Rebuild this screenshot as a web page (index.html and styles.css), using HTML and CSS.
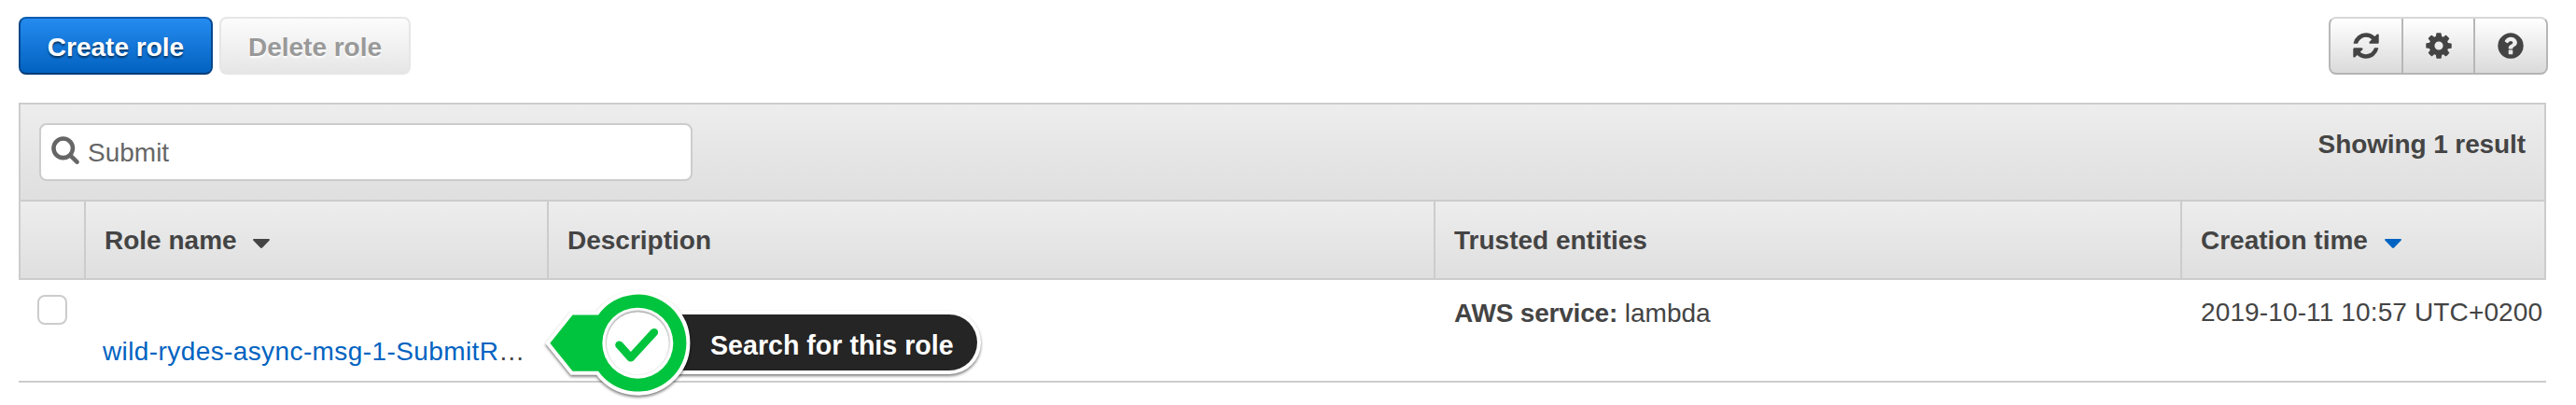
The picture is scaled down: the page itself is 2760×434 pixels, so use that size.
FILE: index.html
```html
<!DOCTYPE html>
<html lang="en">
<head>
<meta charset="utf-8">
<title>Roles</title>
<link rel="stylesheet" href="styles.css">
</head>
<body>
<main class="page">
  <div class="toolbar">
    <button class="btn btn-primary">Create role</button>
    <button class="btn btn-disabled" disabled>Delete role</button>
    <div class="btn-group">
      <button class="icon-btn" aria-label="Refresh"><svg class="icon" viewBox="0 0 1792 1792"><path d="M1639 1056q0 5-1 7-64 268-268 434.500t-478 166.500q-146 0-282.500-55t-243.500-157l-129 129q-19 19-45 19t-45-19-19-45v-448q0-26 19-45t45-19h448q26 0 45 19t19 45-19 45l-137 137q71 66 161 102t187 36q134 0 250-65t186-179q11-17 53-117 8-23 30-23h192q13 0 22.500 9.500t9.500 22.500zm25-800v448q0 26-19 45t-45 19h-448q-26 0-45-19t-19-45 19-45l138-138q-148-137-349-137-134 0-250 65t-186 179q-11 17-53 117-8 23-30 23h-199q-13 0-22.500-9.500t-9.500-22.500v-7q65-268 270-434.500t480-166.500q146 0 284 55.500t245 156.500l130-129q19-19 45-19t45 19 19 45z"/></svg></button>
      <button class="icon-btn" aria-label="Settings"><svg class="icon" viewBox="0 0 1792 1792"><path d="M1152 896q0-106-75-181t-181-75-181 75-75 181 75 181 181 75 181-75 75-181zm512-109v222q0 12-8 23t-20 13l-185 28q-19 54-39 91 35 50 107 138 10 12 10 25t-9 23q-27 37-99 108t-94 71q-12 0-26-9l-138-108q-44 23-91 38-16 136-29 186-7 28-36 28h-222q-14 0-24.500-8.500t-11.500-21.500l-28-184q-49-16-90-37l-141 107q-10 9-25 9-14 0-25-11-126-114-165-168-7-10-7-23 0-12 8-23 15-21 51-66.500t54-70.500q-27-50-41-99l-183-27q-13-2-21-12.500t-8-23.500v-222q0-12 8-23t19-13l186-28q14-46 39-92-40-57-107-138-10-12-10-24 0-10 9-23 26-36 98.500-107.500t94.500-71.500q13 0 26 10l138 107q44-23 91-38 16-136 29-186 7-28 36-28h222q14 0 24.500 8.500t11.500 21.500l28 184q49 16 90 37l142-107q9-9 24-9 13 0 25 10 129 119 165 170 7 8 7 22 0 12-8 23-15 21-51 66.500t-54 70.500q26 50 41 98l183 28q13 2 21 12.500t8 23.500z"/></svg></button>
      <button class="icon-btn" aria-label="Help"><svg class="icon" viewBox="0 0 1792 1792"><path d="M1024 1376v-192q0-14-9-23t-23-9h-192q-14 0-23 9t-9 23v192q0 14 9 23t23 9h192q14 0 23-9t9-23zm256-672q0-88-55.500-163t-138.500-116-170-41q-243 0-371 213-15 24 8 42l132 100q7 6 19 6 16 0 25-12 53-68 86-92 34-24 86-24 48 0 85.500 26t37.500 59q0 38-20 61t-68 45q-63 28-115.500 86.500t-52.500 125.500v36q0 14 9 23t23 9h192q14 0 23-9t9-23q0-19 21.500-49.500t54.500-49.500q32-18 49-28.500t46-35 44.500-48 28-60.500 12.500-81zm384 192q0 209-103 385.500t-279.500 279.500-385.500 103-385.500-103-279.500-279.500-103-385.500 103-385.500 279.500-279.500 385.500-103 385.500 103 279.500 279.500 103 385.500z"/></svg></button>
    </div>
  </div>

  <section class="table">
    <div class="filter-bar">
      <div class="search">
        <svg class="icon" viewBox="0 0 1792 1792"><path d="M1216 832q0-185-131.500-316.500t-316.500-131.500-316.500 131.500-131.500 316.500 131.500 316.500 316.500 131.500 316.500-131.500 131.500-316.500zm512 832q0 52-38 90t-90 38q-54 0-90-38l-343-342q-179 124-399 124-143 0-273.500-55.500t-225-150-150-225-55.500-273.500 55.500-273.500 150-225 225-150 273.500-55.500 273.500 55.500 225 150 150 225 55.500 273.500q0 220-124 399l343 343q37 37 37 90z"/></svg>
        <span class="search-text">Submit</span>
      </div>
      <div class="count">Showing 1 result</div>
    </div>
    <div class="row head">
      <div class="cell"></div>
      <div class="cell">Role name <svg class="caret" viewBox="0 0 18 10"><path d="M1 0H17Q18.600 .4 17.500 1.700L10 9.500Q9 10.400 8 9.500L.5 1.700Q-.6 .4 1 0Z"/></svg></div>
      <div class="cell">Description</div>
      <div class="cell">Trusted entities</div>
      <div class="cell">Creation time <svg class="caret caret-active" viewBox="0 0 18 10"><path d="M1 0H17Q18.600 .4 17.500 1.700L10 9.500Q9 10.400 8 9.500L.5 1.700Q-.6 .4 1 0Z"/></svg></div>
    </div>
    <div class="row body">
      <div class="cell cell-check"><span class="checkbox"></span></div>
      <div class="cell cell-name"><a class="link">wild-rydes-async-msg-1-SubmitR</a>…</div>
      <div class="cell cell-description">
        <div class="callout">
          <svg class="callout-shape" width="490" height="140" viewBox="570 300 490 140">
            <g class="sticker">
              <rect class="outline" x="660" y="337" width="387" height="60" rx="30"/>
              <rect class="pill" x="660" y="337" width="387" height="60" rx="30"/>
            </g>
            <g class="sticker">
              <path class="outline" d="M589.300 367.700 613.500 337.500H641A52 52 0 1 1 641 397.700H613.500Z"/>
              <path class="marker" d="M589.300 367.700 613.500 337.500H641A52 52 0 1 1 641 397.700H613.500Z"/>
            </g>
            <circle class="disc" cx="683.300" cy="367.700" r="38"/>
            <circle class="disc-inner" cx="683.300" cy="367.700" r="33.500"/>
            <path class="check" d="M663.500 369.700 675.800 383.300 700.800 356.200"/>
          </svg>
          <span class="callout-text">Search for this role</span>
        </div>
      </div>
      <div class="cell"><b class="service">AWS service:</b> lambda</div>
      <div class="cell cell-date">2019-10-11 10:57 UTC+0200</div>
    </div>
  </section>
</main>
</body>
</html>
```
FILE: styles.css
```css
* { box-sizing: border-box; }

body {
  margin: 0;
  background: #fff;
  color: #444;
  font: 28px/40px "Liberation Sans", Arial, sans-serif;
}

.page {
  width: 2760px;
  height: 434px;
  padding: 18px 30px 0 20px;
  overflow: hidden;
}

.toolbar { display: flex; height: 62px; }

.btn {
  height: 62px;
  padding: 3px 0 0;
  border: 2px solid;
  border-radius: 8px;
  font: bold 28px/54px "Liberation Sans", Arial, sans-serif;
}

.btn-primary {
  width: 208px;
  margin-right: 7px;
  border-color: #0a5cb0 #06478c #043b78;
  background: linear-gradient(#258bf0, #0262c0);
  color: #fff;
  text-shadow: 0 2px 2px rgba(0, 0, 0, .55);
}

.btn-disabled {
  width: 205px;
  border-color: #e6e6e6;
  background: linear-gradient(#fcfcfc, #e6e6e6);
  color: #999;
  text-shadow: 0 2px 2px #fff;
}

.btn-group {
  display: flex;
  width: 235px;
  margin-left: auto;
  border: 2px solid;
  border-color: #d8d8d8 #b7b7b7 #b4b4b4;
  border-radius: 8px;
  background: linear-gradient(#fff, #dadada);
}

.icon-btn {
  display: flex;
  flex: 1;
  align-items: center;
  justify-content: center;
  padding: 0 0 1px;
  border: 0;
  border-right: 2px solid #b7b7b7;
  background: none;
}

.icon-btn:last-child { border-right: 0; }

.icon { flex: none; width: 32px; height: 32px; fill: #444; }

.table { width: 2708px; margin-top: 30px; }

.filter-bar {
  display: flex;
  justify-content: space-between;
  height: 104px;
  padding: 20px;
  border: 2px solid #ccc;
  border-bottom: 0;
  background: linear-gradient(#ededed, #dfdfdf);
}

.search {
  display: flex;
  width: 700px;
  height: 62px;
  padding: 10px;
  border: 2px solid #ccc;
  border-radius: 8px;
  background: #fff;
  color: #666;
}

.search .icon { fill: #666; }
.search-text { margin-left: 8px; }
.count { padding-top: 3px; font-weight: bold; letter-spacing: -.1px; }

.row {
  display: grid;
  grid-template-columns: 72px 496px 950px 800px 390px;
}

.head {
  height: 86px;
  border: solid #ccc;
  border-width: 2px 0;
  background: linear-gradient(#ededed, #dfdfdf);
  font-weight: bold;
}

.head .cell {
  padding: 22px 0 0 20px;
  border-right: 2px solid #ccc;
}

.head .cell:first-child { border-left: 2px solid #ccc; }

.caret {
  width: 18px;
  height: 10px;
  margin-left: 10px;
  vertical-align: 1px;
  fill: #444;
}

.caret-active { fill: #0063c1; }

.body { height: 110px; border-bottom: 2px solid #ccc; }
.body .cell { padding: 16px 0 0 20px; white-space: nowrap; }
.body .cell-name { padding: 57px 0 0 18px; }
.body .cell-date { padding-top: 15px; letter-spacing: .13px; }

.checkbox {
  display: block;
  width: 32px;
  height: 32px;
  border: 2px solid #ccc;
  border-radius: 8px;
}

.link { color: #0063c1; letter-spacing: .4px; }
.service { letter-spacing: -.2px; }

.body .cell-description { position: relative; padding: 0; }

/* The callout lies over the row and its bottom rule. */
.callout {
  position: absolute;
  top: 0;
  left: -18px;
  width: 490px;
  height: 140px;
}

.callout-shape { display: block; }
.sticker { filter: drop-shadow(0 2px 1.500px rgba(0, 0, 0, .5)); }
.outline { fill: #fff; stroke: #fff; stroke-width: 8; }
.pill { fill: #252525; }
.marker { fill: #00c43e; }
.disc { fill: #fff; }
.disc-inner { fill: #fff; filter: drop-shadow(0 -1px 1px rgba(0, 0, 0, .5)); }

.check {
  fill: none;
  stroke: #00c43e;
  stroke-width: 8.600;
  stroke-linecap: round;
  stroke-linejoin: round;
}

.callout-text {
  position: absolute;
  top: 50px;
  left: 191px;
  color: #fff;
  font-size: 28.600px;
  font-weight: bold;
}
```
